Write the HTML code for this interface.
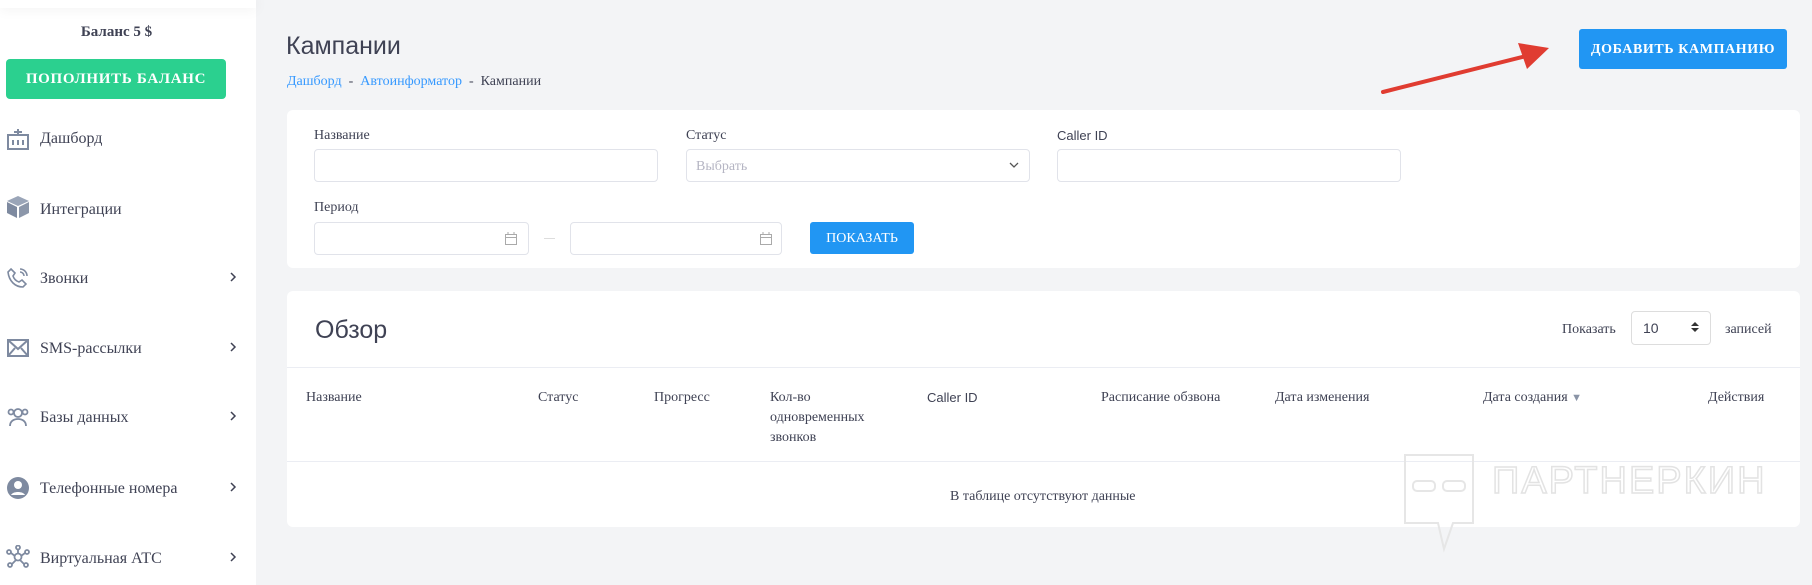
<!DOCTYPE html>
<html><head><meta charset="utf-8"><style>
*{box-sizing:border-box;margin:0;padding:0}
body{width:1812px;height:585px;overflow:hidden;background:#f3f4f6;font-family:"Liberation Serif",serif;color:#3f4254;position:relative}
.a{position:absolute;white-space:nowrap}
.sb{position:absolute;left:0;top:0;width:256px;height:585px;background:#fff}
.mi{position:absolute;left:40px;font-size:16px;color:#3f4254}
.ic{position:absolute;left:6px;width:24px;height:24px}
.chev{position:absolute;left:228px;width:10px;height:10px}
.card{position:absolute;left:287px;width:1513px;background:#fff;border-radius:6px}
.lbl{position:absolute;font-size:14px;color:#3f4254}
.inp{position:absolute;border:1px solid #e1e3ea;border-radius:4px;background:#fff;height:33px}
.th{position:absolute;top:388px;font-size:14px;color:#3f4254;line-height:20px}
</style></head><body>
<div class="sb"></div>
<div class="a" style="left:0;top:0;width:256px;height:8px;box-shadow:0 0 14px rgba(0,0,0,0.08)"></div>
<div class="a" style="left:0;top:24px;width:233px;text-align:center;font-size:15px;font-weight:bold;color:#3f4254">Баланс 5 $</div>
<div class="a" style="left:6px;top:59px;width:220px;height:40px;background:#2bd08f;border-radius:4px;color:#fff;font-weight:bold;font-size:15px;text-align:center;line-height:41px;letter-spacing:0.7px">ПОПОЛНИТЬ БАЛАНС</div>

<svg class="ic" style="top:127px" viewBox="0 0 24 24" fill="none" stroke="#7e8aa0" stroke-width="2"><rect x="2" y="8" width="20" height="14"/><path d="M12 2v6M8 5h8M7 13v5M12 13v5M17 13v5"/></svg>
<div class="mi" style="top:130px">Дашборд</div>
<svg class="ic" style="top:195px" viewBox="0 0 24 24"><path d="M12 1L23 6 12 11 1 6z" fill="#9aa5b8"/><path d="M1 7l10 5v11L1 18z" fill="#7e8aa0"/><path d="M23 7l-10 5v11l10-5z" fill="#8c97aa"/></svg>
<div class="mi" style="top:201px">Интеграции</div>
<svg class="ic" style="top:266px" viewBox="0 0 24 24" fill="none" stroke="#7e8aa0" stroke-width="1.6"><path d="M5 3l4 4-2 3c1 3 3 5 6 6l3-2 4 4-3 3C9 21 3 15 2 6z"/><path d="M14 3a7 7 0 017 7M14 6a4 4 0 014 4"/></svg>
<div class="mi" style="top:270px">Звонки</div>
<svg class="ic" style="top:336px" viewBox="0 0 24 24" fill="none" stroke="#7e8aa0" stroke-width="2"><rect x="2" y="4" width="20" height="16"/><path d="M2 4l10 9 10-9M2 20l7-8M22 20l-7-8"/></svg>
<div class="mi" style="top:340px">SMS-рассылки</div>
<svg class="ic" style="top:405px" viewBox="0 0 24 24" fill="none" stroke="#7e8aa0" stroke-width="1.8"><circle cx="12" cy="8" r="4"/><path d="M4 21c0-5 4-7 8-7s8 2 8 7"/><circle cx="5" cy="7" r="2.5"/><circle cx="19" cy="7" r="2.5"/></svg>
<div class="mi" style="top:409px">Базы данных</div>
<svg class="ic" style="top:476px" viewBox="0 0 24 24"><circle cx="12" cy="12" r="11" fill="#7e8aa0"/><circle cx="12" cy="9" r="4" fill="#fff"/><path d="M5 19c2-4 12-4 14 0" fill="#fff"/></svg>
<div class="mi" style="top:480px">Телефонные номера</div>
<svg class="ic" style="top:545px" viewBox="0 0 24 24" fill="none" stroke="#7e8aa0" stroke-width="1.8"><circle cx="12" cy="12" r="3.5"/><circle cx="12" cy="2.5" r="2"/><circle cx="3" cy="7" r="2"/><circle cx="21" cy="7" r="2"/><circle cx="4" cy="20" r="2"/><circle cx="20" cy="20" r="2"/><path d="M12 5v4M5 8l4 3M19 8l-4 3M6 19l4-4M18 19l-4-4"/></svg>
<div class="mi" style="top:550px">Виртуальная АТС</div>
<svg class="chev" style="top:272px" viewBox="0 0 10 10" fill="none" stroke="#3f4254" stroke-width="1.5"><path d="M3 1l4 4-4 4"/></svg>
<svg class="chev" style="top:342px" viewBox="0 0 10 10" fill="none" stroke="#3f4254" stroke-width="1.5"><path d="M3 1l4 4-4 4"/></svg>
<svg class="chev" style="top:411px" viewBox="0 0 10 10" fill="none" stroke="#3f4254" stroke-width="1.5"><path d="M3 1l4 4-4 4"/></svg>
<svg class="chev" style="top:482px" viewBox="0 0 10 10" fill="none" stroke="#3f4254" stroke-width="1.5"><path d="M3 1l4 4-4 4"/></svg>
<svg class="chev" style="top:552px" viewBox="0 0 10 10" fill="none" stroke="#3f4254" stroke-width="1.5"><path d="M3 1l4 4-4 4"/></svg>

<div class="a" style="left:286px;top:32px;font-family:'Liberation Sans',sans-serif;font-size:25px;color:#3f4254">Кампании</div>
<div class="a" style="left:287px;top:74px;font-size:14px;color:#3f4254"><span style="color:#3699ff">Дашборд</span> &nbsp;- &nbsp;<span style="color:#3699ff">Автоинформатор</span> &nbsp;- &nbsp;Кампании</div>
<div class="a" style="left:1579px;top:29px;width:208px;height:40px;background:#2196f3;border-radius:3px;color:#fff;font-weight:bold;font-size:14px;text-align:center;line-height:41px;letter-spacing:0.6px">ДОБАВИТЬ КАМПАНИЮ</div>
<svg class="a" style="left:0;top:0" width="1812" height="120"><path d="M1383 92L1530 55" stroke="#e03c31" stroke-width="4" stroke-linecap="round"/><path d="M1549 48L1518 43L1527 69z" fill="#e03c31"/></svg>

<div class="card" style="top:110px;height:158px"></div>
<div class="lbl" style="left:314px;top:128px">Название</div>
<div class="inp" style="left:314px;top:149px;width:344px"></div>
<div class="lbl" style="left:686px;top:128px">Статус</div>
<div class="inp" style="left:686px;top:149px;width:344px"></div>
<div class="a" style="left:696px;top:159px;font-size:14px;color:#b5b5c3">Выбрать</div>
<svg class="a" style="left:1008px;top:160px" width="12" height="10" viewBox="0 0 12 10" fill="none" stroke="#555" stroke-width="1.3"><path d="M2 3l4 4 4-4"/></svg>
<div class="lbl" style="left:1057px;top:128px;font-family:'Liberation Sans',sans-serif;font-size:13px">Caller ID</div>
<div class="inp" style="left:1057px;top:149px;width:344px"></div>
<div class="lbl" style="left:314px;top:200px">Период</div>
<div class="inp" style="left:314px;top:222px;width:215px"></div>
<div class="inp" style="left:570px;top:222px;width:212px"></div>
<svg class="a" style="left:505px;top:232px" width="12" height="13" viewBox="0 0 12 13" fill="none" stroke="#aaa"><rect x="0.5" y="2.5" width="11" height="10"/><path d="M0.5 5.5h11M3 0v3M9 0v3"/></svg>
<svg class="a" style="left:760px;top:232px" width="12" height="13" viewBox="0 0 12 13" fill="none" stroke="#aaa"><rect x="0.5" y="2.5" width="11" height="10"/><path d="M0.5 5.5h11M3 0v3M9 0v3"/></svg>
<div class="a" style="left:544px;top:238px;width:11px;height:1px;background:#ddd"></div>
<div class="a" style="left:810px;top:222px;width:104px;height:32px;background:#2196f3;border-radius:3px;color:#fff;font-size:14px;text-align:center;line-height:34px">ПОКАЗАТЬ</div>

<div class="card" style="top:291px;height:236px"></div>
<div class="a" style="left:315px;top:316px;font-family:'Liberation Sans',sans-serif;font-size:25px;color:#3f4254">Обзор</div>
<div class="a" style="left:1562px;top:322px;font-size:14px">Показать</div>
<div class="inp" style="left:1631px;top:311px;width:80px;height:34px;border-color:#ddd"></div>
<div class="a" style="left:1643px;top:320px;font-family:'Liberation Sans',sans-serif;font-size:14px">10</div>
<svg class="a" style="left:1691px;top:321px" width="8" height="12" viewBox="0 0 8 12" fill="#333"><path d="M0 5l4-4 4 4zM0 7l4 4 4-4z"/></svg>
<div class="a" style="left:1725px;top:322px;font-size:14px">записей</div>
<div class="a" style="left:287px;top:367px;width:1513px;height:1px;background:#ebedf3"></div>
<div class="th" style="left:306px">Название</div>
<div class="th" style="left:538px">Статус</div>
<div class="th" style="left:654px">Прогресс</div>
<div class="th" style="left:770px">Кол-во<br>одновременных<br>звонков</div>
<div class="th" style="left:927px;font-family:'Liberation Sans',sans-serif;font-size:13px">Caller ID</div>
<div class="th" style="left:1101px">Расписание обзвона</div>
<div class="th" style="left:1275px">Дата изменения</div>
<div class="th" style="left:1483px">Дата создания <span style="color:#8a94a6;font-size:11px">▼</span></div>
<div class="th" style="left:1708px">Действия</div>
<div class="a" style="left:287px;top:461px;width:1513px;height:1px;background:#ebedf3"></div>
<div class="a" style="left:950px;top:489px;font-size:14px">В таблице отсутствуют данные</div>
<svg class="a" style="left:1403px;top:453px" width="74" height="100" viewBox="0 0 74 100" fill="none" stroke="#e6e6e6" stroke-width="2"><path d="M2 2h68v68H50l-9 26-6-26H2z"/><rect x="10" y="28" width="22" height="10" rx="4"/><rect x="40" y="28" width="22" height="10" rx="4"/></svg>
<div class="a" style="left:1492px;top:460px;font-family:'Liberation Sans',sans-serif;font-size:38px;color:transparent;-webkit-text-stroke:1.5px #e3e3e3;letter-spacing:2px">ПАРТНЕРКИН</div>
</body></html>
